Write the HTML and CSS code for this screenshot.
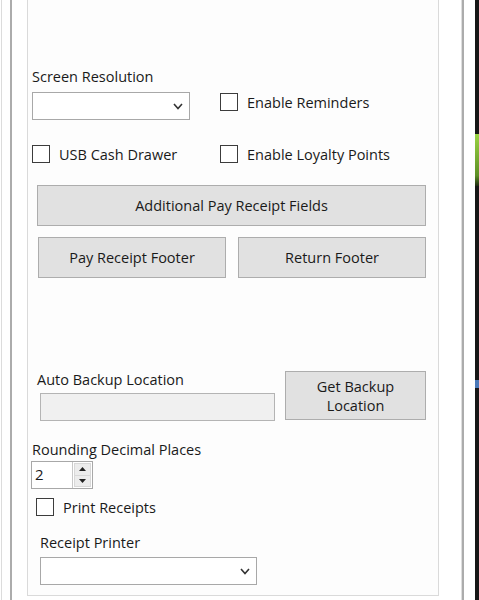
FILE: index.html
```html
<!DOCTYPE html>
<html lang="en">
<head>
    <meta charset="UTF-8">
    <meta name="viewport" content="width=device-width, initial-scale=1.0">
    <title>Settings</title>
    <link rel="stylesheet" href="styles.css">
</head>
<body>
    <div class="desktop">
        <div class="window">
            <div class="frame">
                <div class="group">
                    <div class="options">
                        <div class="label">Screen Resolution</div>
                        <div class="empty"></div>
                        <div class="combo res-combo">
                            <svg width="10" height="7" viewBox="0 0 10 7"><polyline points="1,1 5,5.5 9,1" fill="none" stroke="#333" stroke-width="1.6"/></svg>
                        </div>
                        <label class="check top"><span class="box"></span>Enable Reminders</label>
                        <label class="check spaced"><span class="box"></span>USB Cash Drawer</label>
                        <label class="check spaced"><span class="box"></span>Enable Loyalty Points</label>
                    </div>

                    <button class="btn wide">Additional Pay Receipt Fields</button>
                    <div class="btn-pair">
                        <button class="btn">Pay Receipt Footer</button>
                        <button class="btn">Return Footer</button>
                    </div>

                    <div class="backup">
                        <div class="backup-field">
                            <div class="label">Auto Backup Location</div>
                            <div class="textbox"></div>
                        </div>
                        <button class="btn backup-btn">Get Backup<br>Location</button>
                    </div>

                    <div class="label rounding">Rounding Decimal Places</div>
                    <div class="numeric">
                        <span class="value">2</span>
                        <div class="spin">
                            <span class="spin-btn"><svg width="7" height="4" viewBox="0 0 7 4"><polygon points="0,4 3.5,0 7,4" fill="#222"/></svg></span>
                            <span class="spin-btn"><svg width="7" height="4" viewBox="0 0 7 4"><polygon points="0,0 3.5,4 7,0" fill="#222"/></svg></span>
                        </div>
                    </div>

                    <label class="check print"><span class="box"></span>Print Receipts</label>

                    <div class="label printer">Receipt Printer</div>
                    <div class="combo printer-combo">
                        <svg width="10" height="7" viewBox="0 0 10 7"><polyline points="1,1 5,5.5 9,1" fill="none" stroke="#333" stroke-width="1.6"/></svg>
                    </div>
                </div>
            </div>
        </div>
        <div class="strip">
            <div class="glow"></div>
            <div class="task"></div>
        </div>
    </div>
</body>
</html>
```

FILE: styles.css
```css
* {
    box-sizing: border-box;
}
body {
    margin: 0;
    background: #fff;
    font-family: "Open Sans", "Noto Sans", sans-serif;
    font-size: 14.5px;
    color: #1a1a1a;
}
.desktop {
    display: flex;
    height: 600px;
    overflow: hidden;
}
.window {
    width: 472px;
    margin-left: 1px;
    border-left: 1px solid #dcdcdc;
    background: #fff;
}
.frame {
    width: 454px;
    height: 600px;
    margin-left: 8px;
    padding-left: 15px;
    border-left: 2px solid #acacac;
    border-right: 2px solid #acacac;
    box-shadow: inset -1px 0 0 #dedede;
}
.group {
    display: flow-root;
    width: 412px;
    height: 596px;
    border: 1px solid #dadada;
    border-top: none;
    background: #fdfdfd;
}
.label {
    height: 18px;
    line-height: 18px;
    white-space: nowrap;
}

/* top options grid */
.options {
    display: grid;
    grid-template-columns: 188px 1fr;
    grid-template-rows: 24px 28px auto;
    margin: 68px 0 0 4px;
}
.combo {
    display: flex;
    align-items: center;
    justify-content: flex-end;
    height: 28px;
    padding-right: 6px;
    border: 1px solid #a8a8a8;
    background: #fff;
}
.res-combo {
    width: 158px;
}
.check {
    display: flex;
    align-items: center;
    gap: 9px;
    height: 18px;
    white-space: nowrap;
}
.check.top {
    margin-top: 1px;
}
.check.spaced {
    margin-top: 25px;
}
.box {
    width: 18px;
    height: 18px;
    border: 1px solid #3c3c3c;
    background: #fff;
}

/* buttons */
.btn {
    display: block;
    height: 41px;
    padding: 0;
    border: 1px solid #adadad;
    background: #e1e1e1;
    font-family: inherit;
    font-size: 14.5px;
    color: #1a1a1a;
}
.wide {
    width: 389px;
    margin: 22px 0 0 9px;
}
.btn-pair {
    display: flex;
    gap: 12px;
    margin: 11px 0 0 10px;
}
.btn-pair .btn {
    width: 188px;
}

/* backup location */
.backup {
    display: flex;
    margin: 93px 0 0 9px;
}
.backup-field .textbox {
    width: 235px;
    height: 28px;
    margin: 4px 0 0 3px;
    border: 1px solid #b4b4b4;
    background: #f0f0f0;
}
.backup-btn {
    width: 141px;
    height: 49px;
    margin-left: 10px;
    line-height: 19px;
}

/* rounding */
.rounding {
    margin: 20px 0 0 4px;
}
.numeric {
    display: flex;
    width: 62px;
    height: 28px;
    margin: 2px 0 0 3px;
    border: 1px solid #a8a8a8;
    background: #fff;
}
.numeric .value {
    flex: 1;
    padding-left: 3px;
    line-height: 25px;
    font-size: 15px;
}
.spin {
    display: flex;
    flex-direction: column;
    width: 20px;
    padding: 1px;
    border-left: 1px solid #c8c8c8;
}
.spin-btn {
    flex: 1;
    display: flex;
    align-items: center;
    justify-content: center;
    background: #ececec;
    border: 1px solid #d8d8d8;
}
.spin-btn + .spin-btn {
    border-top: none;
}
.check.print {
    margin: 9px 0 0 8px;
}

/* printer */
.printer {
    margin: 18px 0 0 12px;
}
.printer-combo {
    width: 217px;
    margin: 5px 0 0 12px;
}

/* dark desktop edge */
.strip {
    flex: 1;
    margin-left: 2px;
    background: #161616;
}
.glow {
    height: 52px;
    margin-top: 134px;
    background: linear-gradient(#9bd443, #5d8f25 80%, #1e2a10);
}
.task {
    height: 8px;
    margin-top: 194px;
    background: #4a78b8;
}
```
